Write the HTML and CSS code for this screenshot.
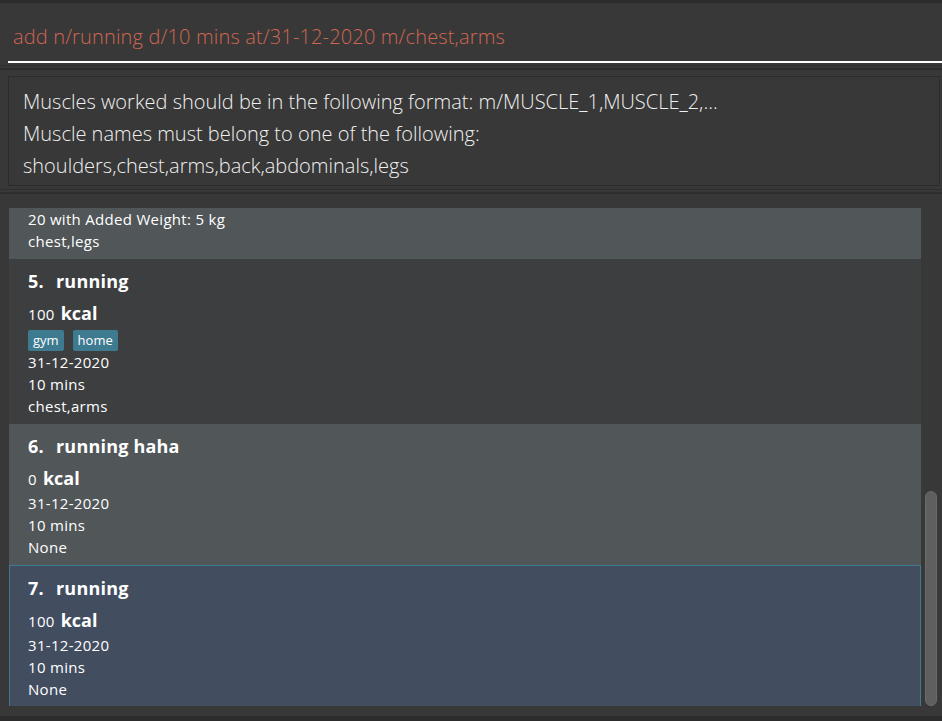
FILE: index.html
```html
<!DOCTYPE html>
<html>
<head>
<meta charset="utf-8">
<link rel="stylesheet" href="styles.css">
</head>
<body>
<div class="app">
  <div class="top-strip"></div>
  <div class="command-pane">
    <div class="command-box">add n/running d/10 mins at/31-12-2020 m/chest,arms</div>
  </div>
  <div class="divider"></div>
  <div class="result-pane">
    <div class="result-box">
      <div class="result-line">Muscles worked should be in the following format: m/MUSCLE_1,MUSCLE_2,...</div>
      <div class="result-line">Muscle names must belong to one of the following:</div>
      <div class="result-line">shoulders,chest,arms,back,abdominals,legs</div>
    </div>
  </div>
  <div class="divider divider-low"></div>
  <div class="list-pane">
    <div class="list-viewport">
      <div class="cell cell-odd cell-partial">
        <div class="line">20 with Added Weight: 5 kg</div>
        <div class="line">chest,legs</div>
      </div>
      <div class="cell cell-even">
        <div class="title"><span class="index">5.</span>running</div>
        <div class="kcal-row"><span class="kcal-num">100</span><span class="kcal-unit">kcal</span></div>
        <div class="tags"><span class="tag">gym</span><span class="tag">home</span></div>
        <div class="line">31-12-2020</div>
        <div class="line">10 mins</div>
        <div class="line">chest,arms</div>
      </div>
      <div class="cell cell-odd">
        <div class="title"><span class="index">6.</span>running haha</div>
        <div class="kcal-row"><span class="kcal-num">0</span><span class="kcal-unit">kcal</span></div>
        <div class="line">31-12-2020</div>
        <div class="line">10 mins</div>
        <div class="line">None</div>
      </div>
      <div class="cell cell-selected">
        <div class="title"><span class="index">7.</span>running</div>
        <div class="kcal-row"><span class="kcal-num">100</span><span class="kcal-unit">kcal</span></div>
        <div class="line">31-12-2020</div>
        <div class="line">10 mins</div>
        <div class="line">None</div>
      </div>
    </div>
    <div class="scrollbar"><div class="thumb"></div></div>
  </div>
  <div class="bottom-strip"></div>
</div>
</body>
</html>
```
FILE: styles.css
```css
html, body {
  margin: 0;
  padding: 0;
  background: #383838;
}
.app {
  width: 942px;
  height: 721px;
  overflow: hidden;
  display: flex;
  flex-direction: column;
  background: #383838;
  font-family: "Open Sans", "Noto Sans", sans-serif;
}
.top-strip {
  height: 3px;
  background: #2c2c2c;
}
.command-pane {
  height: 60px;
  padding-left: 8px;
  display: flex;
  flex-direction: column;
  justify-content: flex-end;
}
.command-box {
  box-sizing: border-box;
  height: 58px;
  line-height: 56px;
  padding-left: 5px;
  padding-top: 4px;
  border-bottom: 2px solid #ffffff;
  color: #d06651;
  font-size: 20px;
  font-weight: 300;
  letter-spacing: 0.15px;
}
.divider {
  height: 5px;
  background: #383838;
  border-top: 1px solid #2f2f2f;
  border-bottom: 2px solid #2e2e2e;
  box-sizing: border-box;
  margin-top: 2px;
}
.result-pane {
  padding: 6px 2px 0 8px;
  height: 118px;
  box-sizing: border-box;
}
.result-box {
  height: 110px;
  box-sizing: border-box;
  border: 1px solid #2b2b2b;
  padding: 9px 14px 0 14px;
  color: #f0f0f0;
  font-size: 20px;
  font-weight: 300;
}
.result-line {
  line-height: 32px;
  height: 32px;
}
.divider-low {
  margin-top: 1px;
}
.list-pane {
  flex: 1;
  display: flex;
  padding: 14px 4px 0 9px;
  min-height: 0;
}
.list-viewport {
  width: 912px;
  height: 498px;
  overflow: hidden;
  display: flex;
  flex-direction: column;
  flex-shrink: 0;
}
.cell {
  padding: 10px 19px 7px 19px;
  color: #ffffff;
  box-sizing: border-box;
  flex-shrink: 0;
}
.cell-partial {
  padding-top: 0;
}
.cell-odd {
  background: #515658;
}
.cell-even {
  background: #3c3e3f;
}
.cell-selected {
  background: #424d5f;
  border: 1px solid #3e7b91;
  padding-left: 18px;
}
.title {
  font-size: 18px;
  font-weight: 700;
  line-height: 24px;
  color: #ffffff;
  letter-spacing: 0.2px;
}
.index {
  display: inline-block;
  width: 28px;
}
.kcal-row {
  margin-top: 6px;
  height: 28px;
  line-height: 28px;
  display: flex;
  align-items: baseline;
  gap: 6px;
}
.kcal-num {
  font-size: 15px;
  letter-spacing: 0.3px;
}
.kcal-unit {
  font-size: 18px;
  font-weight: 700;
}
.line {
  font-size: 15px;
  letter-spacing: 0.3px;
  line-height: 22px;
  height: 22px;
}
.tags {
  display: flex;
  gap: 9px;
  padding-top: 3px;
  height: 24px;
  box-sizing: border-box;
}
.tag {
  background: #3e7b91;
  color: #ffffff;
  font-size: 13px;
  line-height: 21px;
  height: 21px;
  padding: 0 5px;
  border-radius: 2px;
}
.scrollbar {
  width: 14px;
  margin-left: 3px;
  display: flex;
  flex-direction: column;
  justify-content: flex-end;
  height: 498px;
}
.thumb {
  height: 215px;
  width: 12px;
  background: #5f5f5f;
  border: 1px solid #6a6a6a;
  border-radius: 6px;
  box-sizing: border-box;
  margin-left: 1px;
}
.bottom-strip {
  height: 5px;
  background: #2c2c2c;
  flex-shrink: 0;
}
```
